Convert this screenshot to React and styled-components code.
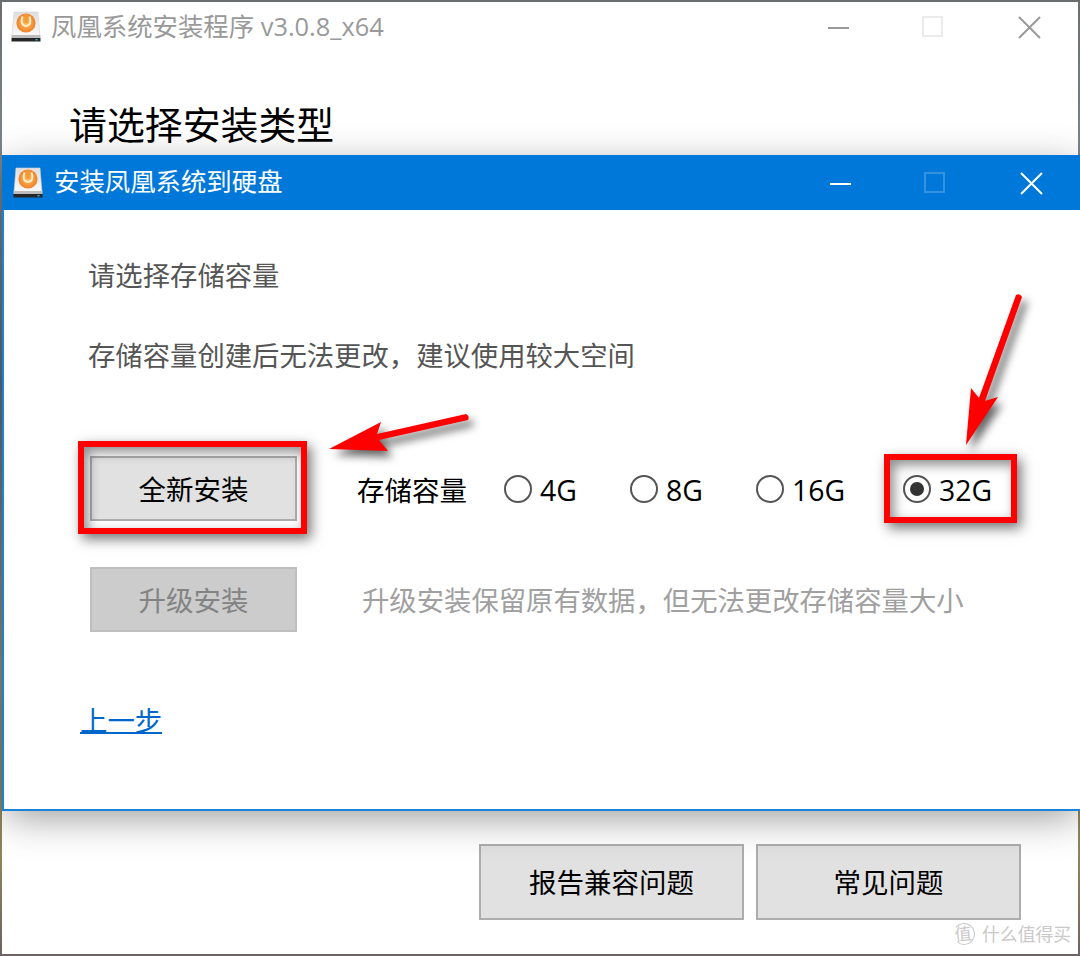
import * as React from "react";
import styled, { createGlobalStyle } from "styled-components";

const GlobalStyle = createGlobalStyle`
  * {
    box-sizing: border-box;
  }
  body {
    margin: 0;
    overflow: hidden;
    font-family: "Open Sans", "Noto Sans CJK SC", sans-serif;
  }
`;

const Desktop = styled.div`
  position: relative;
  width: 1080px;
  height: 956px;
  padding: 2px;
  overflow: hidden;
  background: linear-gradient(
    180deg,
    #6a6d70 0%,
    #7b8489 15%,
    #5c6a78 40%,
    #968a70 70%,
    #8d8358 90%,
    #6e6264 100%
  );
`;

const Window = styled.div`
  display: flex;
  flex-direction: column;
  height: 952px;
  background: #fff;
`;

// The dialog lies over the installer window
const Dialog = styled.div`
  position: absolute;
  top: 155px;
  left: 2px;
  width: 1080px;
  height: 656px;
  display: flex;
  flex-direction: column;
  background: #fff;
  border: 2px solid #1a82d8;
  border-top-width: 0;
  box-shadow: 0 9px 38px -4px rgba(0, 0, 0, 0.42);
`;

const TitleBar = styled.div`
  display: flex;
  align-items: center;
  flex: none;
  height: ${(props) => (props.$active ? 55 : 50)}px;
  margin: 0 -2px;
  padding-left: ${(props) => (props.$active ? 11 : 11)}px;
  color: ${(props) => (props.$active ? "#fff" : "#999")};
  background: ${(props) => (props.$active ? "#0078d9" : "transparent")};
`;

const Title = styled.div`
  flex: 1;
  margin-left: ${(props) => props.$gap}px;
  padding-bottom: 3px;
  font-size: 25.4px;
  line-height: 36px;
  white-space: pre;
`;

const Controls = styled.svg`
  flex: none;
  width: 216px;
  height: 24px;
  margin-right: ${(props) => props.$right}px;
  fill: none;
  stroke: currentColor;
  stroke-width: 2;
`;

const Heading = styled.h1`
  margin: 45px 0 0 67px;
  font-size: 37.9px;
  font-weight: 400;
  line-height: 54px;
  color: #000;
`;

const Footer = styled.div`
  display: flex;
  justify-content: flex-end;
  gap: 12px;
  margin-top: auto;
  padding: 0 57px 34px 0;
`;

const Button = styled.button`
  width: ${(props) => props.$width}px;
  height: ${(props) => props.$height}px;
  padding: 2px 0 0;
  border: 2px solid #adadad;
  background: #e1e1e1;
  font-family: inherit;
  font-size: 27.5px;
  line-height: 40px;
  color: #000;
  &:disabled {
    border-color: #bfbfbf;
    background: #ccc;
    color: #838383;
  }
`;

const Body = styled.div`
  display: flex;
  flex-direction: column;
  padding: 46px 60px 0 84px;
`;

const Text = styled.p`
  margin: 0 0 40px;
  font-size: 27.35px;
  line-height: 40px;
  color: #555;
`;

const Row = styled.div`
  display: flex;
  align-items: center;
  height: 65px;
  margin: ${(props) => props.$top}px 0 0 2px;
`;

const Label = styled.span`
  width: 147px;
  margin-left: 60px;
  padding-top: 5px;
  font-size: 27.5px;
  line-height: 40px;
`;

const Hint = styled.span`
  margin-left: 65px;
  padding-top: 3px;
  font-size: 27.35px;
  line-height: 40px;
  color: #a0a0a0;
  white-space: nowrap;
`;

const Option = styled.label`
  display: flex;
  align-items: center;
  gap: 8px;
  width: ${(props) => props.$width}px;
  font-size: 28.4px;
  line-height: 40px;
`;

const OptionName = styled.span`
  padding-top: 2px;
`;

const Radio = styled.span`
  display: flex;
  flex: none;
  width: 28px;
  height: 28px;
  padding: 5px;
  border: 2px solid #555;
  border-radius: 50%;
  &::after {
    content: "";
    flex: 1;
    border-radius: 50%;
    background: ${(props) => (props.$checked ? "#333" : "transparent")};
  }
`;

const Back = styled.a`
  align-self: flex-start;
  margin: 77px 0 0 -8px;
  border-bottom: 2px solid #0066cc;
  font-size: 27.4px;
  line-height: 23px;
  color: #0066cc;
`;

const Marker = styled.div`
  position: absolute;
  top: ${(props) => props.$y}px;
  left: ${(props) => props.$x}px;
  width: ${(props) => props.$w}px;
  height: ${(props) => props.$h}px;
  border: 6px solid #fe0000;
  box-shadow: 4px 5px 12px rgba(0, 0, 0, 0.55), inset 4px 5px 12px rgba(0, 0, 0, 0.45);
`;

const Arrows = styled.svg`
  position: absolute;
  top: 0;
  left: 0;
  width: 1080px;
  height: 956px;
  pointer-events: none;
  fill: #fe0000;
  filter: drop-shadow(5px 6px 4px rgba(0, 0, 0, 0.6));
`;

const Watermark = styled.div`
  position: absolute;
  right: 9px;
  bottom: 9px;
  display: flex;
  align-items: center;
  gap: 7px;
  font-size: 17.8px;
  line-height: 26px;
  color: #c9c9c9;
`;

const Stamp = styled.span`
  width: 22px;
  height: 22px;
  border: 1px solid #c9c9c9;
  border-left-color: transparent;
  border-radius: 50%;
  font-size: 17px;
  line-height: 19px;
  text-align: center;
  text-indent: -2px;
  transform: rotate(-6deg);
`;

const DiskIcon = () => (
  <svg width="30" height="34" viewBox="0 0 30 34">
    <defs>
      <linearGradient id="case" x1="0" y1="0" x2="0" y2="1">
        <stop offset="0" stopColor="#dedede" />
        <stop offset="1" stopColor="#fafafa" />
      </linearGradient>
      <radialGradient id="ball">
        <stop offset="0" stopColor="#ffbd5c" />
        <stop offset="1" stopColor="#f08229" />
      </radialGradient>
    </defs>
    <path d="M3 2h24l2 24H1z" fill="url(#case)" stroke="#d4d4d4" strokeWidth="0.6" />
    <path d="M.5 25h29v3H.5z" fill="#bcbcbc" />
    <path d="M.5 28h29v3.5H.5z" fill="#262626" />
    <path d="M24.5 29h2v1.4h-2z" fill="#35b8e6" />
    <circle cx="15" cy="13" r="9.6" fill="url(#ball)" />
    <path
      d="M11.5 6.5Q8.5 15 15 16Q21.5 15 18.500 6.500"
      fill="none"
      stroke="#fff0cf"
      strokeWidth="2"
    />
    <path d="M15 4v9" stroke="#f39a35" strokeWidth="3" />
  </svg>
);

const WindowControls = ({ right, dim }) => (
  <Controls viewBox="0 0 216 24" $right={right}>
    <path d="M0 13h21" />
    <rect x="95" y="2" width="19" height="19" opacity={dim} />
    <path d="M191 2l21 21M212 2l-21 21" />
  </Controls>
);

const sizes = [
  { name: "4G", width: 126 },
  { name: "8G", width: 126 },
  { name: "16G", width: 147 },
  { name: "32G", width: 100 },
];

class App extends React.Component {
  state = { size: "32G" };

  render() {
    return (
      <Desktop lang="zh-CN">
        <GlobalStyle />
        <Window>
          <TitleBar>
            <DiskIcon />
            <Title $gap={10}>凤凰系统安装程序 v3.0.8_x64</Title>
            <WindowControls right={36} dim={0.2} />
          </TitleBar>
          <Heading>请选择安装类型</Heading>
          <Footer>
            <Button $width={265} $height={76}>报告兼容问题</Button>
            <Button $width={265} $height={76}>常见问题</Button>
          </Footer>
        </Window>
        <Dialog>
          <TitleBar $active>
            <DiskIcon />
            <Title $gap={11}>安装凤凰系统到硬盘</Title>
            <WindowControls right={36} dim={0.2} />
          </TitleBar>
          <Body>
            <Text>请选择存储容量</Text>
            <Text>存储容量创建后无法更改，建议使用较大空间</Text>
            <Row $top={40}>
              <Button $width={207} $height={65}>全新安装</Button>
              <Label>存储容量</Label>
              {sizes.map(({ name, width }) => (
                <Option key={name} $width={width} onClick={() => this.setState({ size: name })}>
                  <Radio $checked={this.state.size === name} />
                  <OptionName>{name}</OptionName>
                </Option>
              ))}
            </Row>
            <Row $top={46}>
              <Button $width={207} $height={65} disabled>升级安装</Button>
              <Hint>升级安装保留原有数据，但无法更改存储容量大小</Hint>
            </Row>
            <Back>上一步</Back>
          </Body>
        </Dialog>
        <Marker $x={78} $y={441} $w={229} $h={93} />
        <Marker $x={884} $y={454} $w={133} $h={69} />
        <Arrows viewBox="0 0 1080 956">
          <path d="M329 449L381 422L377 434L466 414Q470 416 468 420L379 440L388 451Z" />
          <path d="M966 445L971 388L979 398L1016 295Q1020 293 1022 297L985 401L998 397Z" />
        </Arrows>
        <Watermark>
          <Stamp>值</Stamp>
          什么值得买
        </Watermark>
      </Desktop>
    );
  }
}

export default App;
